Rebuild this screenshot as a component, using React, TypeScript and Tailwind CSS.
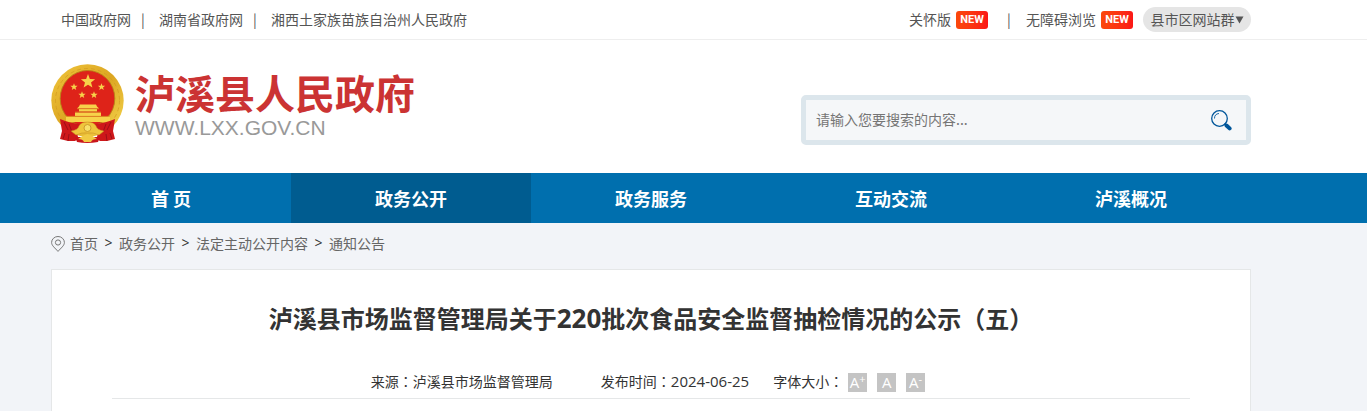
import type { ReactNode } from "react";

const star = (cx: number, cy: number, r: number) =>
  Array.from({ length: 10 }, (_, i) => {
    const radius = i % 2 === 0 ? r : r * 0.42;
    const a = (Math.PI / 5) * i - Math.PI / 2;
    return `${(cx + radius * Math.cos(a)).toFixed(2)},${(cy + radius * Math.sin(a)).toFixed(2)}`;
  }).join(" ");

function Container({ children, className = "" }: { children: ReactNode; className?: string }) {
  return (
    <div className="w-full max-w-[1251px] pl-[51px]">
      <div className={className}>{children}</div>
    </div>
  );
}

function Emblem() {
  return (
    <svg className="h-[80px] w-[73px] shrink-0" viewBox="0 0 73 80" aria-hidden="true">
      <defs>
        <linearGradient id="gold" x1="0" y1="0" x2="1" y2="1">
          <stop offset="0" stopColor="#f0c63c" />
          <stop offset="0.5" stopColor="#dca622" />
          <stop offset="1" stopColor="#f6d850" />
        </linearGradient>
      </defs>
      <ellipse cx="36.5" cy="36.5" rx="36.2" ry="36.2" fill="url(#gold)" />
      <ellipse cx="36.5" cy="36.5" rx="32" ry="32" fill="none" stroke="#d29a20" strokeWidth="0.7" strokeDasharray="4 3" />
      <ellipse cx="36.5" cy="34.5" rx="27.3" ry="28" fill="#de2319" stroke="#b98218" strokeWidth="0.9" />
      <g fill="#f7d24a">
        <polygon points={star(37, 17.5, 7.5)} />
        <polygon points={star(23, 23, 3.8)} />
        <polygon points={star(50.5, 23, 3.8)} />
        <polygon points={star(31, 31, 3.8)} />
        <polygon points={star(43, 31, 3.8)} />
        <path d="M28 42.5L29 40.5H45L46 42.500L48 44.500H26Z" />
        <path d="M28 45H46V47.500H28Z" />
        <path d="M24 48.500H50V52H24Z" />
        <path d="M15 52.500H59V58H15Z" />
      </g>
      <path d="M26 44.800H48M24 48H50M15 52.300H59" stroke="#d08b1b" strokeWidth="0.600" />
      <path d="M9 55Q18 59 29 60L26 70Q29 75 24 77L17 77L9 75L11 67Z" fill="#ce171a" />
      <path d="M64 55Q55 59 44 60L47 70Q44 75 49 77L56 77L64 75L62 67Z" fill="#ce171a" />
      <path d="M24 73H49L47 78Q36 80 26 78Z" fill="#c9151b" />
      <path d="M13 58L17 66M18 60L21 68M60 58L56 66M55 60L52 68M14 69L12 75M18 70L17 77M59 69L61 75M55 70L56 77" stroke="#970d16" strokeWidth="0.900" />
      <path d="M20 67Q27 66 28 62Q30 58 36.5 58Q43 58 45 62Q46 66 53 67L48 71Q42 68 36.5 69Q31 68 25 71Z" fill="#efc53c" stroke="#c68b20" strokeWidth="0.500" />
      <circle cx="36.500" cy="64" r="3.500" fill="#f8df68" stroke="#cb9527" strokeWidth="0.900" />
      <path d="M27 75Q32 71 36.500 70Q41 71 46 75Q41 75 40 78H33Q32 75 27 75Z" fill="#f1ca43" />
    </svg>
  );
}

function NewBadge() {
  return (
    <span className="ml-[5px] flex h-[18px] w-8 items-center justify-center rounded-[3px] bg-linear-to-r from-[#fb480c] to-[#fb1616] font-['Roboto',sans-serif] text-[11px] leading-none font-bold text-white">
      NEW
    </span>
  );
}

function Bar() {
  return <span className="mr-1 w-6 text-center">|</span>;
}

function Centered({ children }: { children: ReactNode }) {
  return (
    <span lang="zh-TW" className="font-['Noto_Sans_CJK_TC',sans-serif]">
      {children}
    </span>
  );
}

const nav = ["首 页", "政务公开", "政务服务", "互动交流", "泸溪概况"];
const crumbs = ["首页", "政务公开", "法定主动公开内容", "通知公告"];

export default function App() {
  return (
    <div lang="zh-CN" className="flex min-h-screen flex-col bg-[#f2f4f8] font-['Noto_Sans_CJK_SC',sans-serif] text-[14px] leading-5 text-[#333]">
      <header className="bg-white">
        <div className="border-b border-[#eee] text-[#555]">
          <Container className="flex h-[39px] items-center justify-between pl-[10px]">
            <div className="flex items-center pb-[2px]">
              <a href="#">中国政府网</a>
              <Bar />
              <a href="#">湖南省政府网</a>
              <Bar />
              <a href="#">湘西土家族苗族自治州人民政府</a>
            </div>
            <div className="flex items-center">
              <a href="#" className="flex items-center"><span className="pb-[2px]">关怀版</span><NewBadge /></a>
              <span className="mr-[5px] ml-[9px] w-6 pb-[2px] text-center">|</span>
              <a href="#" className="flex items-center"><span className="pb-[2px]">无障碍浏览</span><NewBadge /></a>
              <button type="button" className="ml-[10px] flex h-[25px] w-[108px] items-center justify-center rounded-full bg-[#e5e5e5]">
                <span className="pb-[2px]">县市区网站群</span>
                <svg className="h-2 w-[9px]" viewBox="0 0 9 8" aria-hidden="true">
                  <path d="M0.500 0.500H8.500L4.500 7.500Z" fill="#555" />
                </svg>
              </button>
            </div>
          </Container>
        </div>
        <Container className="flex h-[133px] items-start justify-between">
          <a href="#" className="mt-6 flex">
            <Emblem />
            <span className="ml-[11px] flex flex-col pt-1">
              <span className="text-[40px] leading-[48px] font-bold text-[#cb3333]">泸溪县人民政府</span>
              <span className="font-['Liberation_Sans',sans-serif] text-[21px] leading-6 text-[#999]">WWW.LXX.GOV.CN</span>
            </span>
          </a>
          <form className="mt-[55px] flex h-[50px] w-[450px] items-center rounded-[5px] border-5 border-[#dce6ec] bg-[#f5f7f9] pr-[14px] pl-[10px]" onSubmit={(e) => e.preventDefault()}>
            <input
              type="text"
              aria-label="搜索"
              placeholder="请输入您要搜索的内容..."
              className="min-w-0 flex-1 bg-transparent pb-[2px] outline-none placeholder:text-[#757575]"
            />
            <button type="submit" aria-label="搜索">
              <svg className="h-[21px] w-[21px]" viewBox="0 0 21 21" fill="none" stroke="#00569a">
                <circle cx="8.500" cy="8.500" r="7.800" strokeWidth="1.300" />
                <path d="M3.500 8.500A5 5 0 0 1 8 3.500" strokeWidth="0.900" />
                <path d="M13.500 13.500L15 15" strokeWidth="2" />
                <path d="M15.500 15.500L18.600 18.400" strokeWidth="4" strokeLinecap="round" />
              </svg>
            </button>
          </form>
        </Container>
      </header>
      <nav className="bg-[#006fae]">
        <Container className="grid h-[50px] grid-cols-5">
          {nav.map((label, i) => (
            <a
              key={label}
              href="#"
              className={`flex items-center justify-center text-[18px] font-bold text-white ${i === 1 ? "bg-[#005c90]" : ""}`}
            >
              {label}
            </a>
          ))}
        </Container>
      </nav>
      <main className="flex flex-1 flex-col">
        <Container className="flex h-[46px] items-center pb-[5px] text-[#666]">
          <svg className="mr-[5px] h-4 w-[14px]" viewBox="0 0 14 16" fill="none" stroke="#777" aria-hidden="true">
            <path d="M7 15.400C4 12 0.600 9.600 0.600 6.500A6.400 6 0 0 1 13.400 6.500C13.400 9.600 10 12 7 15.400Z" />
            <circle cx="7" cy="6.500" r="2.600" />
          </svg>
          {crumbs.map((label, i) => (
            <span key={label} className="flex pb-px">
              {i > 0 && <span className="w-[21px] text-center font-['Open_Sans',sans-serif] text-[#333]">&gt;</span>}
              <a href="#">{label}</a>
            </span>
          ))}
        </Container>
        <div className="flex w-full max-w-[1251px] flex-1 pl-[51px]">
          <article className="flex-1 border border-b-0 border-[#e5e7e8] bg-white px-[60px]">
            <h1 className="pt-[30px] text-center text-[24px] leading-9 font-bold">
              泸溪县市场监督管理局关于
              <span className="font-['Open_Sans',sans-serif] text-[26px]">220</span>
              批次食品安全监督抽检情况的公示<Centered>（</Centered>五<Centered>）</Centered>
            </h1>
            <div className="mt-[30px] flex h-[33px] items-center justify-center border-b border-[#e5e7e8] pr-[6px]">
              <span className="pb-[2px]">来源<Centered>：</Centered>泸溪县市场监督管理局</span>
              <span className="ml-12 pb-[2px]">
                发布时间<Centered>：</Centered>
                <time dateTime="2024-06-25" className="font-['Open_Sans',sans-serif] text-[15px]">2024-06-25</time>
              </span>
              <span className="ml-6 pb-[2px]">字体大小<Centered>：</Centered></span>
              <div className="ml-[5px] flex gap-[10px] font-['Open_Sans',sans-serif] text-[15px] text-white">
                <button type="button" aria-label="放大字体" className="flex h-[19px] w-[19px] items-center justify-center bg-[#c4c4c4]">
                  A<span className="-mt-2 text-[11px] leading-none">+</span>
                </button>
                <button type="button" aria-label="默认字体" className="flex h-[19px] w-[19px] items-center justify-center bg-[#c4c4c4]">A</button>
                <button type="button" aria-label="缩小字体" className="flex h-[19px] w-[19px] items-center justify-center bg-[#c4c4c4]">
                  A<span className="-mt-2 text-[11px] leading-none">-</span>
                </button>
              </div>
            </div>
          </article>
        </div>
      </main>
    </div>
  );
}
